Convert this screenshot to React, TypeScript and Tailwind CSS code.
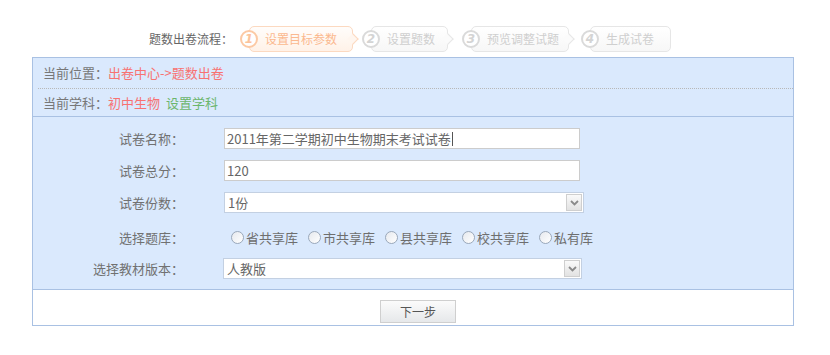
import React from "react";

const font = { fontFamily: '"Noto Sans CJK SC", "Noto Sans", sans-serif' };

function Circle({ n, active }: { n: number; active?: boolean }) {
  return (
    <div
      className={
        "relative z-10 flex h-[18px] w-[18px] shrink-0 items-center justify-center rounded-full border-2 bg-white text-[12px] font-bold italic leading-none " +
        (active ? "border-[#fcc9a4] text-[#fcc39b]" : "border-[#dadada] text-[#d4d4d4]")
      }
      style={{ fontFamily: '"DejaVu Sans", sans-serif' }}
    >
      {n}
    </div>
  );
}

function Step({
  n,
  label,
  active,
  arrow,
  pr,
}: {
  n: number;
  label: string;
  active?: boolean;
  arrow?: boolean;
  pr: string;
}) {
  return (
    <div className="flex items-center">
      <Circle n={n} active={active} />
      <div
        className={
          "relative -ml-[9px] flex h-[26px] items-center rounded-[5px] border pl-[15px] text-[12px] " +
          pr +
          " " +
          (active
            ? "border-[#fcd9c0] bg-gradient-to-b from-[#fffdfb] to-[#fff2e8] text-[#fbb98f]"
            : "border-[#e6e6e6] bg-gradient-to-b from-white to-[#f7f7f7] text-[#cfcfcf]")
        }
      >
        {label}
        {arrow && (
          <span
            className={
              "absolute right-[-5px] top-[8px] h-[8px] w-[8px] rotate-45 border-r border-t " +
              (active ? "border-[#fcd9c0] bg-[#fff6ef]" : "border-[#e6e6e6] bg-[#fbfbfb]")
            }
          />
        )}
      </div>
    </div>
  );
}

function Chevron() {
  return (
    <svg width="9" height="6" viewBox="0 0 9 6">
      <path d="M1 1 L4.5 4.5 L8 1" fill="none" stroke="#8a8a8a" strokeWidth="1.8" />
    </svg>
  );
}

function Select({ value, w }: { value: string; w: string }) {
  return (
    <div className={"flex h-[21px] items-center border border-[#c3d0e2] bg-white " + w}>
      <span className="flex-1 pl-[3px] text-[13px] text-[#666]">{value}</span>
      <div className="mr-[1px] flex h-[17px] w-[16px] items-center justify-center border border-[#cfcfcf] bg-gradient-to-b from-[#fafafa] to-[#e2e2e2]">
        <Chevron />
      </div>
    </div>
  );
}

function Radio({ label }: { label: string }) {
  return (
    <div className="flex items-center">
      <span className="h-[13px] w-[13px] rounded-full border border-[#9aa8ba] bg-gradient-to-br from-[#e6e9ee] to-white" />
      <span className="ml-[2px] text-[13px] text-[#6e6e6e]">{label}</span>
    </div>
  );
}

function Label({ children }: { children: React.ReactNode }) {
  return <div className="w-[151px] shrink-0 text-right text-[13px] text-[#717171]">{children}</div>;
}

export default function App() {
  return (
    <div className="h-[355px] w-[830px] bg-white pt-[26px]" style={font}>
      <div className="flex h-[26px] items-center pl-[149px]">
        <span className="w-[91px] text-[12px] text-[#666]">题数出卷流程：</span>
        <Step n={1} label="设置目标参数" active arrow pr="pr-[15px]" />
        <div className="w-[9px]" />
        <Step n={2} label="设置题数" arrow pr="pr-[12px]" />
        <div className="w-[14px]" />
        <Step n={3} label="预览调整试题" arrow pr="pr-[9px]" />
        <div className="w-[12px]" />
        <Step n={4} label="生成试卷" pr="pr-[16px]" />
      </div>

      <div className="ml-[32px] mt-[5px] w-[762px] border border-[#a9c1e3]">
        <div className="bg-[#dae9fd]">
          <div className="ml-[5px] flex h-[31px] items-center border-b border-dotted border-[#b8b8b8] pl-[5px] text-[13px]">
            <span className="text-[#777]">当前位置：</span>
            <span className="text-[#f87272]">出卷中心-&gt;题数出卷</span>
          </div>
          <div className="flex h-[28px] items-center border-b border-[#a9c1e3] pl-[10px] text-[13px]">
            <span className="text-[#777]">当前学科：</span>
            <span className="text-[#f87272]">初中生物</span>
            <span className="ml-[6px] text-[#6cb66c]">设置学科</span>
          </div>
        </div>

        <div className="flex flex-col border-b border-[#a9c1e3] bg-[#dae9fd] pb-[10px] pt-[11px]">
          <div className="flex h-[21px] items-center">
            <Label>试卷名称：</Label>
            <div className="ml-[40px] flex h-[21px] w-[356px] items-center border border-[#cccccc] bg-white pl-[2px] text-[13px] text-[#666]">
              2011年第二学期初中生物期末考试试卷<span className="ml-[1px] inline-block h-[14px] w-[1px] bg-[#555]" />
            </div>
          </div>
          <div className="mt-[11px] flex h-[21px] items-center">
            <Label>试卷总分：</Label>
            <div className="ml-[40px] flex h-[21px] w-[356px] items-center border border-[#cccccc] bg-white pl-[2px] text-[13px] text-[#666]">
              120
            </div>
          </div>
          <div className="mt-[11px] flex h-[21px] items-center">
            <Label>试卷份数：</Label>
            <div className="ml-[40px]">
              <Select value="1份" w="w-[360px]" />
            </div>
          </div>
          <div className="mt-[14px] flex h-[21px] items-center">
            <Label>选择题库：</Label>
            <div className="ml-[47px] flex items-center gap-[10px]">
              <Radio label="省共享库" />
              <Radio label="市共享库" />
              <Radio label="县共享库" />
              <Radio label="校共享库" />
              <Radio label="私有库" />
            </div>
          </div>
          <div className="mt-[10px] flex h-[21px] items-center">
            <Label>选择教材版本：</Label>
            <div className="ml-[39px]">
              <Select value="人教版" w="w-[359px]" />
            </div>
          </div>
        </div>

        <div className="flex h-[35px] justify-center bg-white pl-[10px] pt-[10px]">
          <button className="h-[23px] w-[76px] border border-[#cfcfcf] bg-gradient-to-b from-[#fbfbfb] to-[#e6e8ea] text-[12px] text-[#555]">
            下一步
          </button>
        </div>
      </div>
    </div>
  );
}
